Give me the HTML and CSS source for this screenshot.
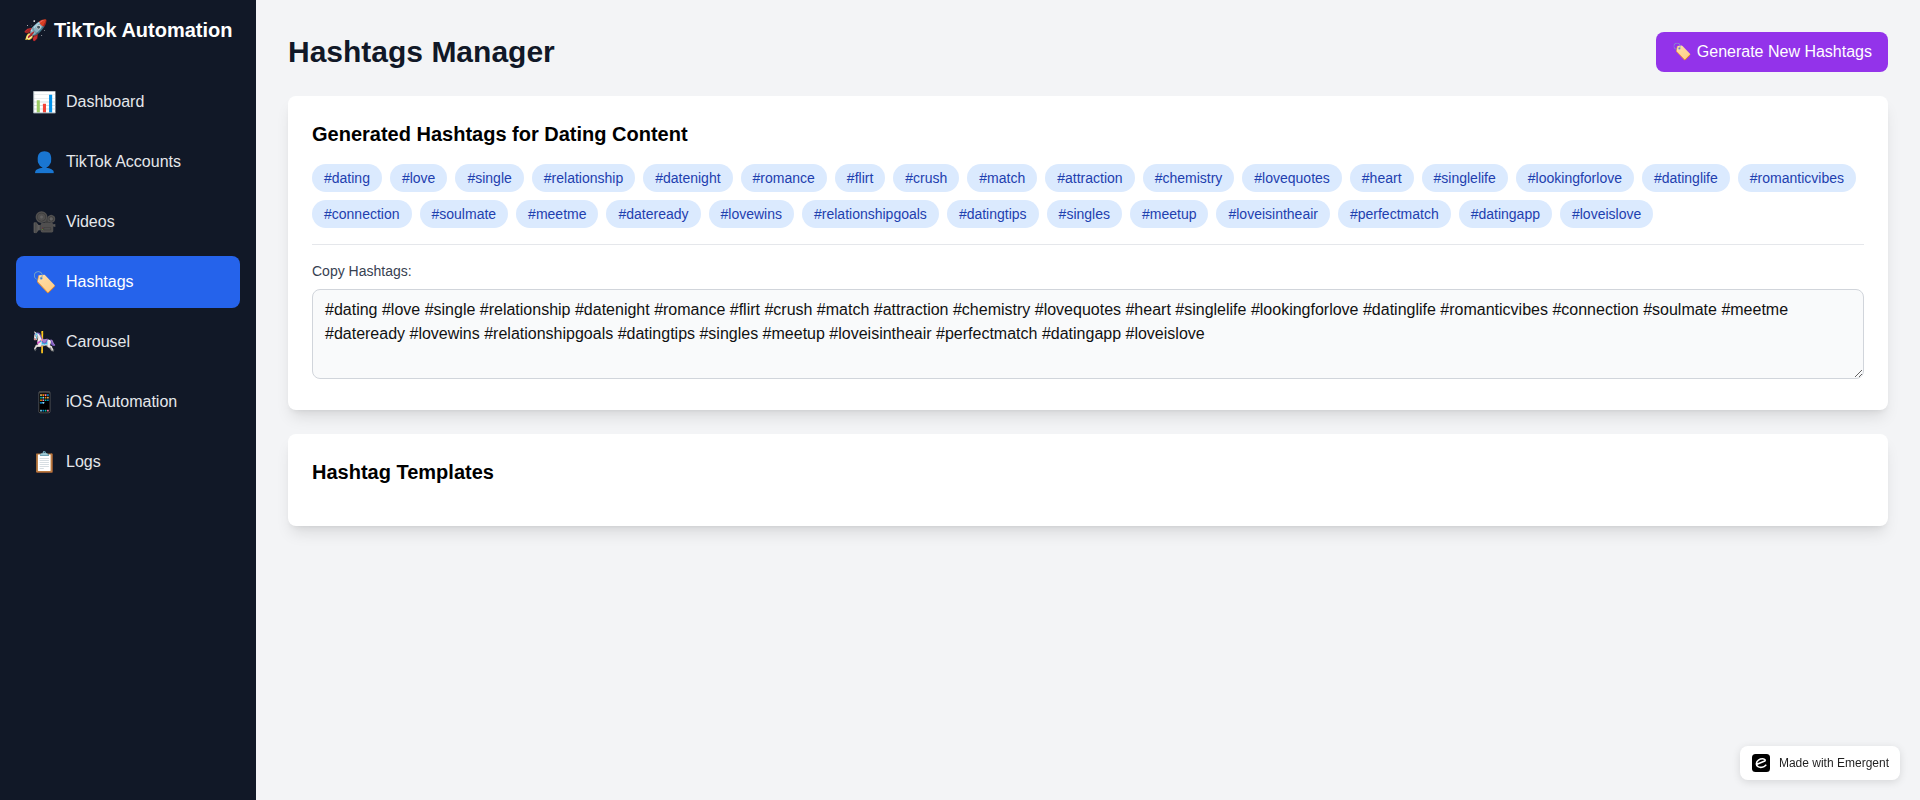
FILE: index.html
```html
<!DOCTYPE html>
<html lang="en">
<head>
  <meta charset="UTF-8">
  <title>Hashtags | TikTok Automation</title>
  <link rel="stylesheet" href="styles.css">
</head>
<body>

  <!-- Sidebar -->
  <aside class="sidebar">
    <div class="brand">🚀 TikTok Automation</div>
    <nav class="nav">
      <a class="nav-item"><span class="nav-icon">📊</span>Dashboard</a>
      <a class="nav-item"><span class="nav-icon">👤</span>TikTok Accounts</a>
      <a class="nav-item"><span class="nav-icon">🎥</span>Videos</a>
      <a class="nav-item active"><span class="nav-icon">🏷️</span>Hashtags</a>
      <a class="nav-item"><span class="nav-icon">🎠</span>Carousel</a>
      <a class="nav-item"><span class="nav-icon">📱</span>iOS Automation</a>
      <a class="nav-item"><span class="nav-icon">📋</span>Logs</a>
    </nav>
  </aside>

  <!-- Main -->
  <main class="main">
    <div class="page-head">
      <h1>Hashtags Manager</h1>
      <button class="btn-generate">🏷️ Generate New Hashtags</button>
    </div>

    <section class="card">
      <h2>Generated Hashtags for Dating Content</h2>
      <div class="tags">
        <span class="tag">#dating</span>
        <span class="tag">#love</span>
        <span class="tag">#single</span>
        <span class="tag">#relationship</span>
        <span class="tag">#datenight</span>
        <span class="tag">#romance</span>
        <span class="tag">#flirt</span>
        <span class="tag">#crush</span>
        <span class="tag">#match</span>
        <span class="tag">#attraction</span>
        <span class="tag">#chemistry</span>
        <span class="tag">#lovequotes</span>
        <span class="tag">#heart</span>
        <span class="tag">#singlelife</span>
        <span class="tag">#lookingforlove</span>
        <span class="tag">#datinglife</span>
        <span class="tag">#romanticvibes</span>
        <span class="tag">#connection</span>
        <span class="tag">#soulmate</span>
        <span class="tag">#meetme</span>
        <span class="tag">#dateready</span>
        <span class="tag">#lovewins</span>
        <span class="tag">#relationshipgoals</span>
        <span class="tag">#datingtips</span>
        <span class="tag">#singles</span>
        <span class="tag">#meetup</span>
        <span class="tag">#loveisintheair</span>
        <span class="tag">#perfectmatch</span>
        <span class="tag">#datingapp</span>
        <span class="tag">#loveislove</span>
      </div>
      <div class="copy-box">
        <label class="copy-label" for="copyArea">Copy Hashtags:</label>
        <textarea id="copyArea" class="copy-area" readonly>#dating #love #single #relationship #datenight #romance #flirt #crush #match #attraction #chemistry #lovequotes #heart #singlelife #lookingforlove #datinglife #romanticvibes #connection #soulmate #meetme #dateready #lovewins #relationshipgoals #datingtips #singles #meetup #loveisintheair #perfectmatch #datingapp #loveislove</textarea>
      </div>
    </section>

    <section class="card">
      <h2>Hashtag Templates</h2>
    </section>
  </main>

  <!-- Badge -->
  <a class="badge">
    <svg class="badge-logo" width="18" height="18" viewBox="0 0 18 18">
      <rect width="18" height="18" rx="3.5" fill="#000"/>
      <path d="M4.4 10.4 L12.8 7 C13.6 6.6 13 4.9 10.8 4.8 C7.6 4.7 4.6 6.8 4.4 9.6 C4.2 12.4 7 13.8 10 13.2 C11.6 12.9 12.8 12.2 13.8 11.2" fill="none" stroke="#fff" stroke-width="1.6" stroke-linecap="round"/>
    </svg>
    Made with Emergent
  </a>

</body>
</html>
```

FILE: styles.css
```css
* { margin: 0; padding: 0; box-sizing: border-box; }
body {
  font-family: "Liberation Sans", Arial, "Noto Color Emoji", sans-serif;
  line-height: 1.5;
  background: #f3f4f6;
  display: flex;
  min-height: 100vh;
  color: #000;
}

/* sidebar */
.sidebar {
  width: 256px;
  flex-shrink: 0;
  background: #111827;
  color: #fff;
  padding: 16px;
}
.brand {
  font-size: 20px;
  font-weight: bold;
  line-height: 28px;
  text-align: center;
  margin-bottom: 32px;
}
.nav {
  display: flex;
  flex-direction: column;
  gap: 8px;
}
.nav-item {
  display: flex;
  align-items: center;
  height: 52px;
  padding: 0 16px;
  border-radius: 8px;
  font-size: 16px;
  color: #e5e7eb;
}
.nav-item.active {
  background: #2563eb;
  color: #fff;
}
.nav-icon {
  font-size: 20px;
  width: 22px;
  margin-right: 12px;
  text-align: center;
}

/* main */
.main {
  flex: 1;
  padding: 32px;
}
.page-head {
  display: flex;
  justify-content: space-between;
  align-items: center;
  margin-bottom: 24px;
}
h1 {
  font-size: 30px;
  line-height: 40px;
  font-weight: bold;
  color: #111827;
}
.btn-generate {
  padding: 8px 16px;
  border: none;
  border-radius: 8px;
  background: #9333ea;
  color: #fff;
  font-family: inherit;
  font-size: 16px;
  line-height: 24px;
  cursor: pointer;
}
.card {
  background: #fff;
  border-radius: 8px;
  padding: 24px;
  margin-bottom: 24px;
  box-shadow: 0 10px 15px -3px rgba(0,0,0,0.1), 0 4px 6px -4px rgba(0,0,0,0.1);
}
h2 {
  font-size: 20px;
  line-height: 28px;
  font-weight: bold;
  margin-bottom: 16px;
}
.tags {
  display: flex;
  flex-wrap: wrap;
  gap: 8px;
}
.tag {
  height: 28px;
  line-height: 28px;
  padding: 0 12px;
  border-radius: 14px;
  background: #dbeafe;
  color: #1e40af;
  font-size: 14px;
}
.copy-box {
  margin-top: 16px;
  padding-top: 16px;
  border-top: 1px solid #e5e7eb;
}
.copy-label {
  display: block;
  font-size: 14px;
  line-height: 20px;
  color: #374151;
  margin-bottom: 8px;
}
.copy-area {
  width: 100%;
  height: 90px;
  padding: 8px 12px;
  border: 1px solid #d1d5db;
  border-radius: 8px;
  background: #f9fafb;
  color: #111;
  font-family: inherit;
  font-size: 16px;
  line-height: 24px;
}

/* badge */
.badge {
  position: fixed;
  right: 20px;
  bottom: 20px;
  display: flex;
  align-items: center;
  gap: 9px;
  height: 34px;
  padding: 0 11px 0 12px;
  background: #fff;
  border-radius: 8px;
  font-size: 12px;
  color: #1f1f1f;
  box-shadow: 0 2px 8px rgba(0,0,0,0.12);
}
```
